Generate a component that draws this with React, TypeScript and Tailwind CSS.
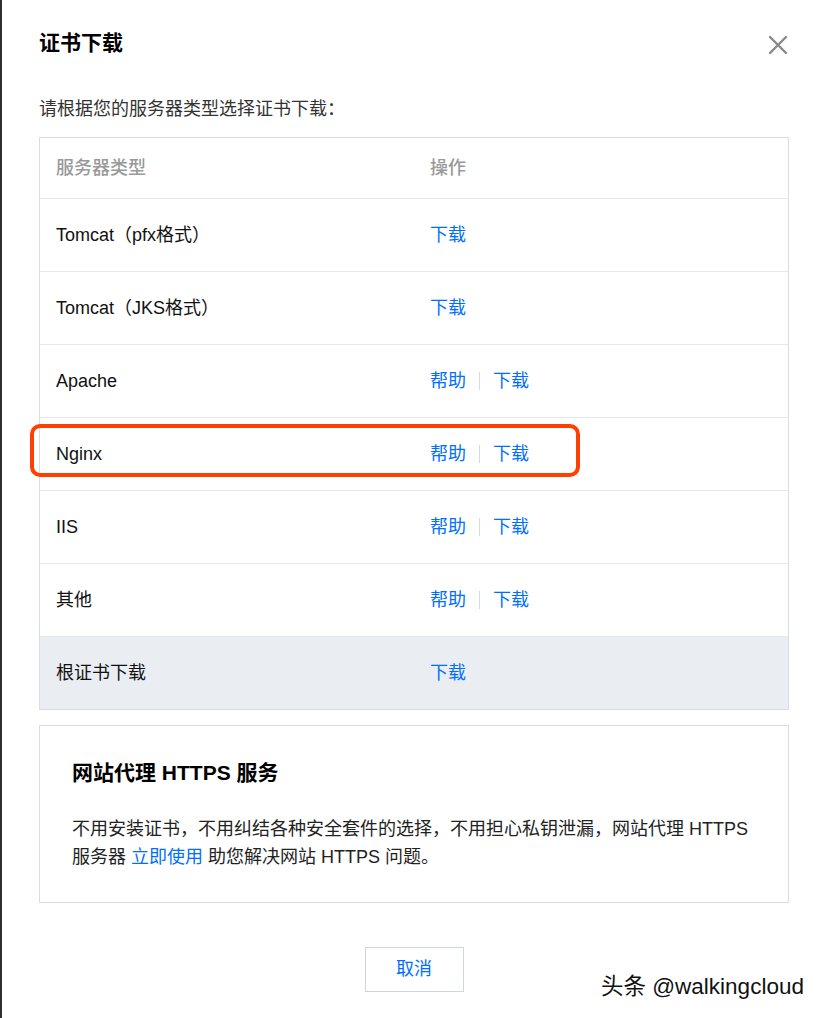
const FONT = { fontFamily: '"Liberation Sans", "Noto Sans CJK SC", sans-serif' };

type Row = { name: string; help?: boolean; root?: boolean };

const ROWS: Row[] = [
  { name: 'Tomcat（pfx格式）' },
  { name: 'Tomcat（JKS格式）' },
  { name: 'Apache', help: true },
  { name: 'Nginx', help: true },
  { name: 'IIS', help: true },
  { name: '其他', help: true },
  { name: '根证书下载', root: true },
];

function Actions({ help }: { help?: boolean }) {
  return (
    <div className="flex items-center text-[#006eff]">
      {help && (
        <>
          <span>帮助</span>
          <span className="mx-[13px] h-[18px] w-px bg-[#d5d9e0]" />
        </>
      )}
      <span>下载</span>
    </div>
  );
}

export default function App() {
  return (
    <div className="relative flex min-h-[1018px] bg-white text-[18px] text-[#111]" style={FONT}>
      <div className="w-[2px] shrink-0 bg-[#2e2e2e]" />
      <div className="flex-1 pl-[37px] pr-[35px]">
        <div className="flex items-center justify-between pt-[29px]">
          <h2 className="text-[21px] font-bold leading-[28px] text-black">证书下载</h2>
          <svg width="20" height="20" viewBox="0 0 20 20" className="mr-[1px] mt-[3px]">
            <path d="M2 2 L18 18 M18 2 L2 18" stroke="#888" strokeWidth="2.4" strokeLinecap="round" />
          </svg>
        </div>
        <p className="mt-[40px] leading-[24px] text-[#333]">请根据您的服务器类型选择证书下载：</p>

        <div className="mt-[16px] border border-[#d8dde5]">
          <div className="flex h-[60px] items-center pl-[16px] font-medium text-[#999]">
            <div className="w-[374px]">服务器类型</div>
            <div>操作</div>
          </div>
          {ROWS.map((r) => (
            <div
              key={r.name}
              className={`flex h-[73px] items-center border-t border-[#e5e8ed] pl-[16px] ${r.root ? 'bg-[#eaedf1]' : ''}`}
            >
              <div className="w-[374px]">{r.name}</div>
              <Actions help={r.help} />
            </div>
          ))}
        </div>

        <div className="mt-[15px] border border-[#d8dde5] px-[32px] pb-[31px] pt-[33px]">
          <h3 className="text-[21px] font-bold leading-[28px] text-black">网站代理 HTTPS 服务</h3>
          <p className="mt-[28px] leading-[28px] text-[#222]">
            不用安装证书，不用纠结各种安全套件的选择，不用担心私钥泄漏，网站代理 HTTPS
            <br />
            服务器 <span className="text-[#006eff]">立即使用</span> 助您解决网站 HTTPS 问题。
          </p>
        </div>

        <div className="mt-[44px] flex justify-center">
          <button className="h-[45px] w-[99px] border border-[#cfd5de] bg-white text-[#006eff]">取消</button>
        </div>
      </div>

      <div className="absolute left-[30px] top-[424px] h-[53px] w-[550px] rounded-[10px] border-[4px] border-[#ff4000]" />

      <div
        className="absolute left-[601px] top-[972px] text-[22.5px] leading-[30px] text-[#111]"
        style={{ textShadow: '1px 1px 0 #fff, -1px -1px 0 #fff, 1px -1px 0 #fff, -1px 1px 0 #fff' }}
      >
        头条 @walkingcloud
      </div>
    </div>
  );
}
